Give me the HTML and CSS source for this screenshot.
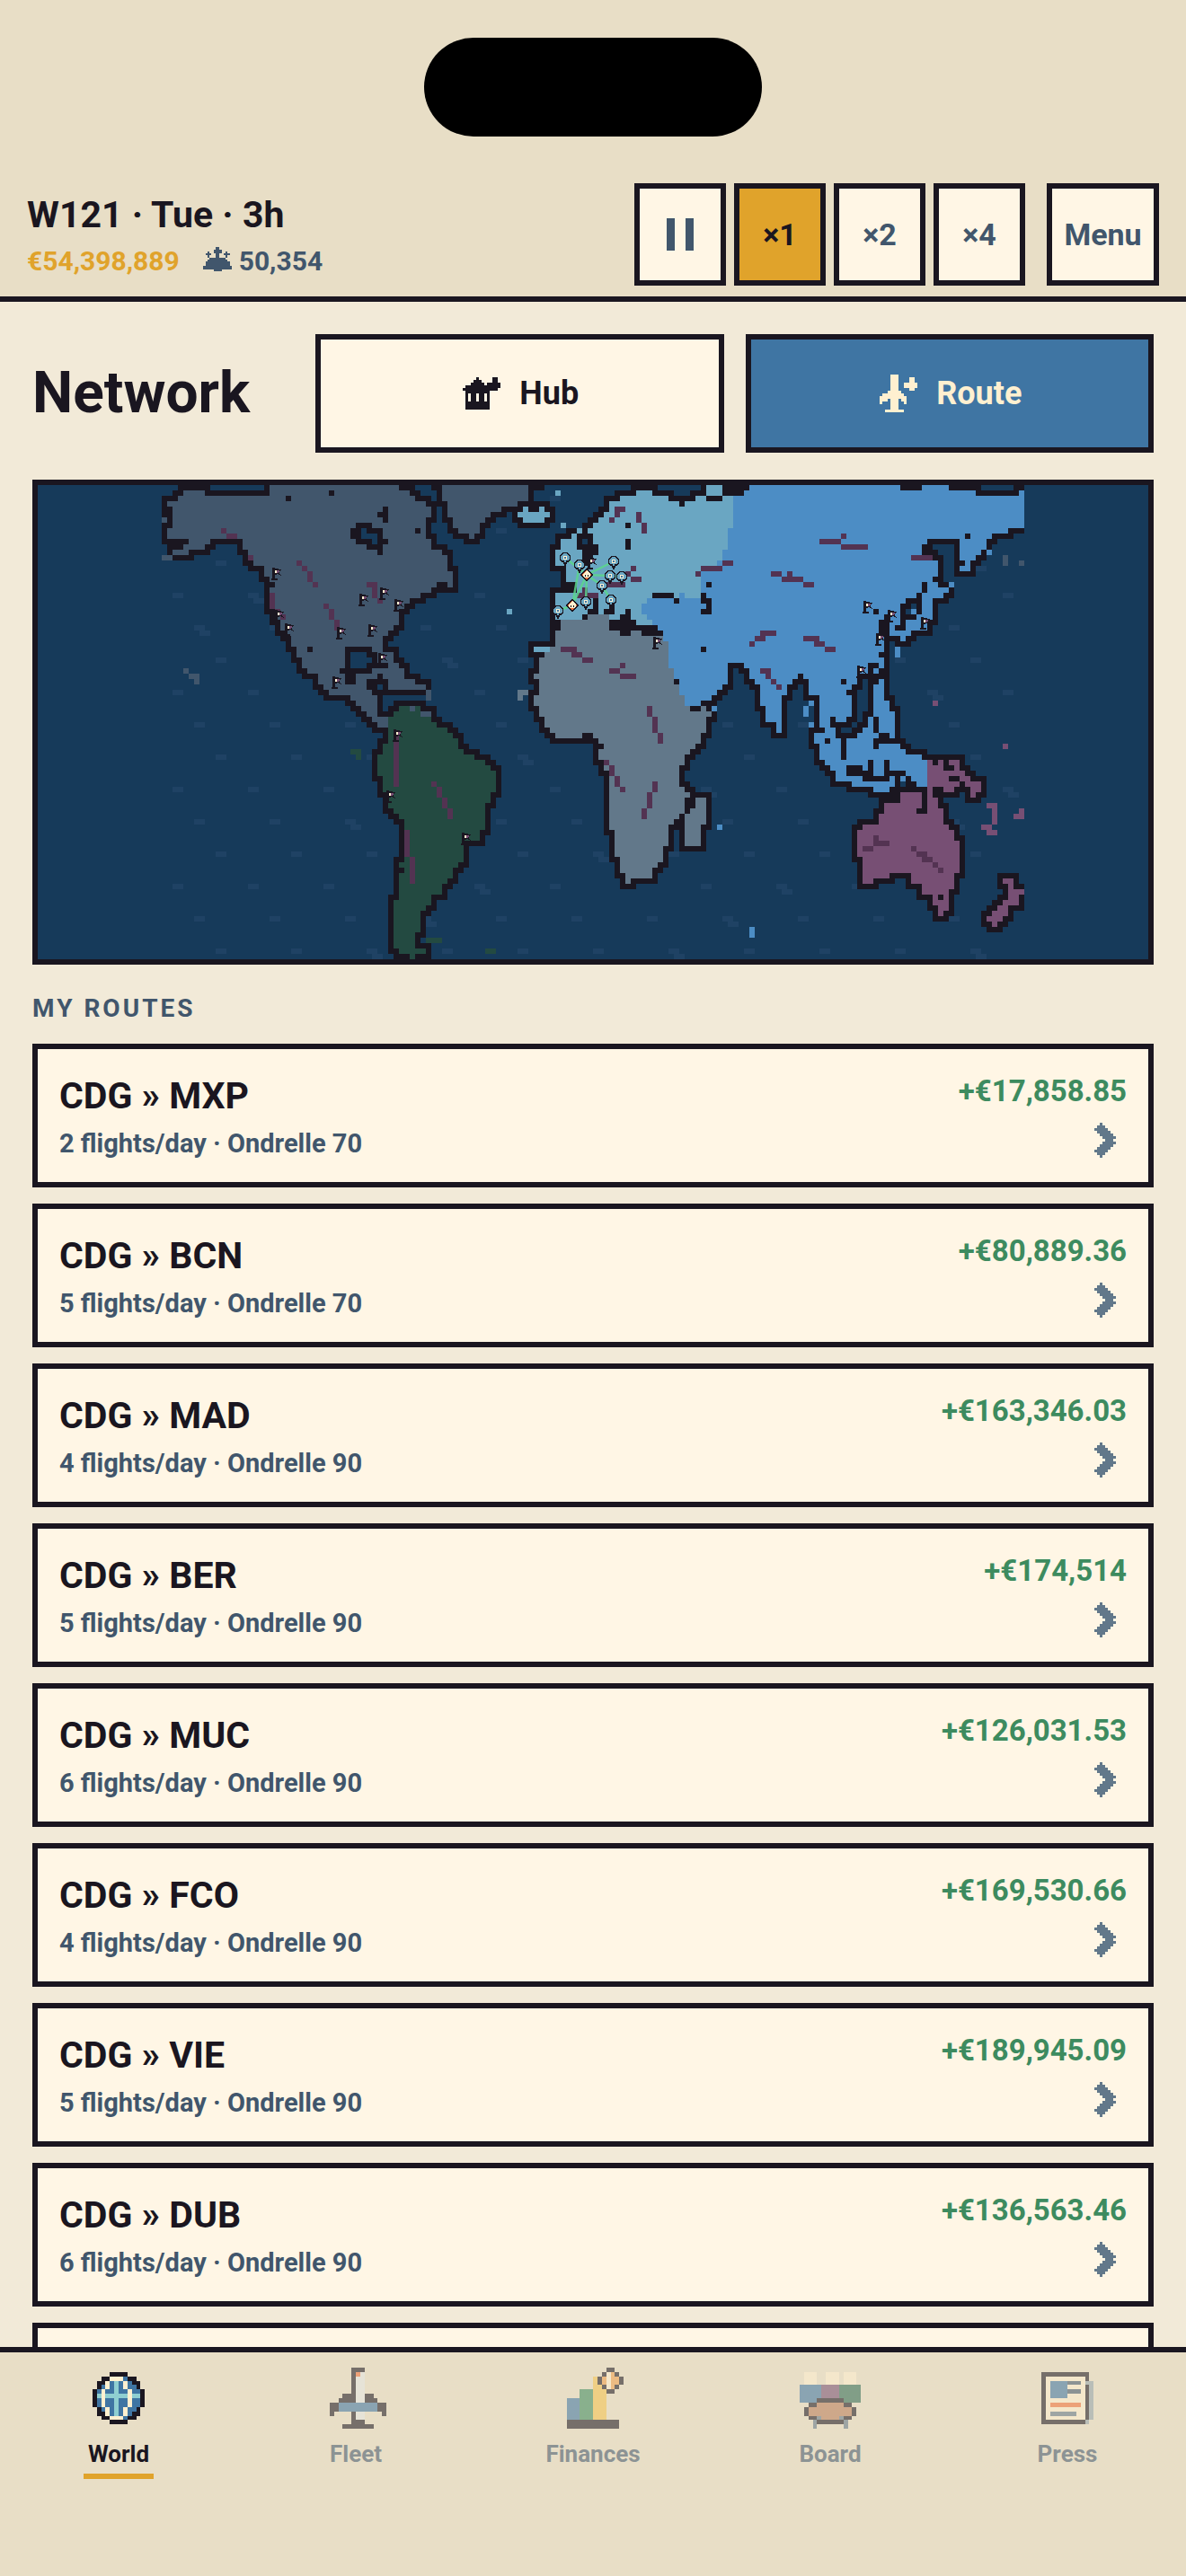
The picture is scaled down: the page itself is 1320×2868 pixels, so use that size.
FILE: index.html
```html
<!DOCTYPE html>
<html lang="en">
<head>
    <meta charset="UTF-8">
    <meta name="viewport" content="width=device-width, initial-scale=1.0">
    <title>Network</title>
    <link rel="stylesheet" href="styles.css">
</head>
<body>
    <!-- Shared pixel icons -->
    <svg class="sprites" aria-hidden="true">
        <symbol id="chevron" viewBox="-4 -2 16 16">
            <path class="run" d="M2 0h1M1 1h3M0 2h5M1 3h5M2 4h5M3 5h5M4 6h3M3 7h5M2 8h5M1 9h5M0 10h5M1 11h3M2 12h1"/>
        </symbol>
        <symbol id="flag" viewBox="0 0 13 15" overflow="visible">
            <path fill="#1a1620" d="M1 0h3v12h3v2h-7v-2h1zM4 1h4v1h3v1h-1v1h-1v3h1v1h1v1h-1v-1h-2v-1h-2v1h-2z"/>
            <path fill="#774f74" d="M4 3h5v2h-1v1h-4z"/>
            <path fill="#fff0d0" d="M4 3h2v3h-2z"/>
        </symbol>
        <symbol id="pin" viewBox="0 0 12 15" overflow="visible">
            <path fill="#6aa6c2" stroke="#1a1620" stroke-width="1.4" d="M-2 -5.500h4l3.500 3.500v3.500l-2 2.500h-1.500l-2 4-2-4h-1.500l-2-2.500v-3.500z"/>
            <path fill="#fff0d0" d="M-2 -2h4v4h-4z"/>
            <path fill="#3f75a3" d="M-1 -1h2v2h-2z"/>
        </symbol>
        <symbol id="hub" viewBox="0 0 12 12" overflow="visible">
            <path fill="#f0703a" stroke="#1a1620" stroke-width="1.4" d="M0 -6.500l6.500 6.500-6.500 6.500-6.500-6.500z"/>
            <path fill="#fff0d0" d="M0 -5l4 4v3h-1v1h-6v-1h-1v-3z"/>
            <path fill="#1a1620" d="M-2 0h1v2h-1zM1 0h1v2h-1z"/>
        </symbol>
    </svg>

    <header class="topbar">
        <div class="status-bar"><div class="island"></div></div>
        <div class="hud">
            <div class="hud-info">
                <div class="clock">W121 · Tue · 3h</div>
                <div class="stats">
                    <span class="cash">€54,398,889</span>
                    <span class="pax">
                        <svg class="pax-icon" viewBox="0 0 16 16" aria-hidden="true"><path class="run" d="M7 1h2M6 2h4M3 3h1M6 3h4M12 3h1M2 4h3M7 4h2M11 4h3M3 5h1M7 5h2M12 5h1M4 6h8M3 7h10M2 8h12M2 9h12M1 10h14M1 11h14M6 12h4"/></svg>
                        50,354
                    </span>
                </div>
            </div>
            <div class="speed">
                <button class="speed-btn" aria-label="Pause"><span class="pause"></span></button>
                <button class="speed-btn active">×1</button>
                <button class="speed-btn">×2</button>
                <button class="speed-btn">×4</button>
            </div>
            <button class="menu-btn">Menu</button>
        </div>
    </header>

    <main class="content">
        <div class="title-row">
            <h1>Network</h1>
            <button class="action">
                <svg class="action-icon" viewBox="0 0 16 16" aria-hidden="true"><path class="run" d="M6 2h1M12 2h2M5 3h3M12 3h2M4 4h5M10 4h5M2 5h13M1 6h13M2 7h9M2 8h1M4 8h2M7 8h2M10 8h1M2 9h1M4 9h2M7 9h2M10 9h1M2 10h1M4 10h2M7 10h2M10 10h1M2 11h9M2 12h9M2 13h9"/></svg>
                Hub
            </button>
            <button class="action primary">
                <svg class="action-icon" viewBox="0 0 16 16" aria-hidden="true"><path class="run" d="M5 1h3M5 2h3M12 2h2M5 3h3M12 3h2M5 4h3M10 4h5M5 5h3M10 5h5M5 6h3M12 6h2M4 7h5M2 8h8M1 9h10M1 10h3M5 10h3M9 10h2M1 11h1M5 11h3M10 11h1M5 12h3M5 13h3M3 14h7"/></svg>
                Route
            </button>
        </div>

        <!-- World map, one unit is one map pixel -->
        <svg class="map" viewBox="-23 0 206 88" role="img" aria-label="World map">
            <defs>
                <pattern id="waves" width="14" height="18" patternUnits="userSpaceOnUse">
                    <path fill="#1f4264" d="M2 2h2v1h-2zM6 8h2v1h-2zM10 14h2v1h-2z"/>
                </pattern>
                <path id="americas" transform="translate(.5 .5)" d="M19 -1V1H8V0H3V1H2V2H0V5H1V7H0V10H1V13H5V12H8V11H9V10H14V12H15V14H16V15H18V17H19V23H20V25H21V27H22V28H23V30H24V32H25V34H26V35H28V37H29V38H30V39H34V40H35V41H36V42H37V43H38V44H39V45H41V47H40V49H39V54H40V57H41V60H42V61H43V62H44V69H43V76H42V86H43V87H49V85H47V83H48V79H49V78H50V76H52V74H53V73H54V71H55V70H56V66H59V64H60V59H61V57H62V52H61V51H60V50H58V49H56V48H55V46H54V45H53V44H51V43H50V41H48V40H43V41H42V42H40V38H49V36H47V35H45V33H44V32H43V30H41V28H42V27H43V26H44V23H45V22H46V21H48V20H50V19H54V15H53V12H52V11H50V9H49V6H50V3H49V2H47V1H46V0H44V-1Z"/>
                <path id="oldworld" transform="translate(.5 .5)" d="M162 0H158V1H151V0H146V-1H140V0H137V-1H108V0H104V-1H100V1H98V2H94V1H91V0H87V1H84V2H82V4H81V5H80V6H79V7H78V8H75V9H73V11H72V15H74V19H72V29H68V31H69V34H68V36H69V38H68V41H69V43H70V45H71V46H72V47H80V51H81V53H82V64H83V69H84V72H85V74H87V73H91V71H92V70H93V67H94V63H95V62H96V67H100V63H101V57H98V56H97V55H96V52H97V50H98V49H99V48H100V46H101V43H102V39H103V38H104V37H105V33H107V34H108V36H109V37H110V41H111V44H113V46H115V39H116V37H117V36H119V39H121V45H120V48H121V51H122V52H123V53H124V55H127V56H131V57H133V60H132V62H129V63H128V69H129V74H132V73H135V72H138V74H140V76H142V78H143V80H145V79H146V75H147V72H148V65H147V63H146V62H145V59H144V57H147V56H149V58H151V57H152V54H150V53H149V52H148V50H141V49H138V48H137V47H136V41H135V39H134V28H136V29H138V28H139V27H142V25H143V21H145V20H146V18H144V13H143V12H141V11H142V10H147V16H150V14H151V13H152V12H153V10H154V9H157V8H162Z"/>
                <clipPath id="clip-americas"><use href="#americas"/></clipPath>
                <clipPath id="clip-oldworld"><use href="#oldworld"/></clipPath>
                <clipPath id="clip-world"><rect width="160" height="88"/></clipPath>
            </defs>

            <rect class="sea" x="-23" width="206" height="88"/>
            <rect fill="url(#waves)" width="160" height="88"/>

            <g clip-path="url(#clip-world)">
                <path class="run wave" d="M17 21h2M7 27h2M53 33h2M67 51h2M101 57h2M35 63h2M81 69h2M59 75h2M49 81h2M105 81h2M39 87h2M95 87h2M151 15h2M143 39h2M157 57h2M147 63h2M115 75h2M151 87h2"/>

                <!-- Land fills -->
                <use class="north" href="#americas"/>
                <g clip-path="url(#clip-americas)">
                    <path class="south" d="M42 43H43V41H46V40H48V43H51V42H70V88H38V46H42Z"/>
                </g>
                <use class="asia" href="#oldworld"/>
                <g clip-path="url(#clip-oldworld)">
                    <path class="europe" d="M68 0H106V8H105V12H104V14H103V15H100V21H90V22H89V24H90V25H91V26H92V31H68Z"/>
                    <path class="africa" d="M68 31H72V29H73V26H74V25H79V24H83V27H93V29H94V34H95V37H96V39H97V41H104V76H68Z"/>
                    <path class="oceania" d="M142 50H160V88H125V57H142Z"/>
                </g>
                <path class="run sea-run" d="M37 8h1M37 9h3M39 10h1M35 31h3M35 32h4M35 33h3M40 37h1M78 10h1M139 22h1M138 23h1M130 36h1M130 37h1M129 38h2M129 39h2M129 40h2M129 41h2M129 42h1M129 43h1M128 44h1M126 45h2M137 55h1"/>

                <!-- Coastlines -->
                <g class="coast">
                    <use href="#americas"/>
                    <use href="#oldworld"/>
                    <g transform="translate(.5 .5)">
                        <path class="north" d="M51 -1V3H52V6H53V8H54V9H56V10H58V9H59V7H60V6H61V5H63V4H66V3H68V-1Z"/>
                        <path class="europe" d="M66 3H71V4H72V6H71V7H66V6H65V4H66Z"/>
                        <path class="oceania" d="M155 72H158V74H159V78H157V80H156V81H155V82H153V81H152V79H153V78H154V77H155V76H156V74H155Z"/>
                    </g>
                </g>
                <path class="run ink-run" d="M50 0h1M69 0h2M1 4h1M2 10h3M1 11h3M20 18h1M31 1h1M23 2h1M47 8h1M27 30h1M41 4h1M40 5h2M41 6h1M51 18h2M44 71h1
                    M36 7h3M35 8h2M38 8h3M35 9h2M40 9h1M36 10h3M40 10h2M38 11h3M40 12h1
                    M34 30h5M34 31h1M38 31h2M34 32h1M39 32h1M34 33h1M38 33h4M33 34h6M34 35h2M34 36h2M40 35h1M38 36h4M38 37h2M41 37h1M39 38h2
                    M68 4h2M101 2h3M104 1h4M96 3h1M86 7h1M86 10h1M86 11h1M77 9h3M77 10h1M79 10h1M77 11h4M78 12h3M78 13h2M78 14h1M75 18h2M73 19h4
                    M91 20h4M95 21h1M101 18h1M100 20h1M100 21h2M101 22h1M100 23h2M100 30h1M95 36h1M73 25h1M73 26h1
                    M78 24h1M80 21h1M80 22h1M79 23h2M83 22h1M82 23h2M86 23h1M85 24h2M83 25h5M83 26h9M85 27h2M89 27h4M70 31h1
                    M78 46h2M81 48h1M98 41h2M100 40h3M101 41h1M97 58h2M97 59h2M97 60h1M96 61h1M96 63h1
                    M118 35h1M122 45h1M149 9h1M148 14h1M143 17h1M141 12h1M142 11h1M132 23h1M134 24h1M133 25h2M133 26h2M133 27h2
                    M141 18h1M141 19h1M140 20h1M138 21h3M137 22h2M140 22h1M137 23h1M140 23h1M137 24h3M137 25h1M136 26h2
                    M133 31h1M131 33h2M131 34h1M133 34h2M129 35h6M129 36h1M131 36h2M128 37h2M131 37h1M127 38h2M131 38h1M128 39h1M131 39h1M128 40h1M131 40h1M128 41h1M131 41h1M128 42h1M130 42h2M127 43h2M130 43h1M132 43h1M124 43h1M124 44h4M129 44h2M132 44h1M125 45h1M128 45h2M132 45h1M125 46h4M133 46h2M132 47h5M132 48h1M126 47h1M126 48h1M126 49h1M126 50h1M123 47h1M126 36h1
                    M131 51h1M134 51h1M127 52h3M131 52h1M134 52h1M127 53h5M134 53h4M130 54h5M136 54h1M138 54h1M136 55h1M138 55h2M135 56h7M134 57h3M133 58h4M141 57h1M141 58h1M141 59h1M140 60h2
                    M143 51h1M145 51h1M145 52h2M146 54h2M148 55h1M143 56h2M143 57h1M144 76h1"/>

                <!-- Mountains -->
                <path class="run peak" d="M11 8h1M12 9h2M16 13h1M25 14h1M26 15h1M27 16h1M27 17h1M28 18h1M38 18h2M39 19h1M39 20h1M40 21h1M20 20h1M20 21h1M20 22h1M21 23h1M22 24h1M30 22h1M31 23h1M31 24h1M32 25h1M32 26h1
                    M43 46h1M43 47h1M43 48h1M43 49h1M43 50h1M43 51h1M43 52h1M43 53h1M43 54h1M43 55h1M50 55h1M51 56h1M51 57h1M52 58h1M52 59h1M53 60h1M53 61h1M45 64h1M45 65h1M45 66h1M45 67h1M45 68h1M46 69h1M46 70h1M46 71h1M46 72h1M46 73h1
                    M74 30h3M76 31h2M78 32h2M85 33h1M83 34h2M85 35h3M90 41h1M90 42h1M91 43h1M91 44h1M91 45h1M92 46h1M92 47h1M82 51h1M83 52h1M83 53h1M84 54h1M84 55h1M85 56h1M91 55h1M91 56h1M90 57h1M90 58h1M90 59h1M89 60h1M89 61h1
                    M84 4h2M84 5h1M83 6h1M88 5h1M88 6h1M89 7h1M89 8h1M87 15h1M86 16h1M87 17h2M82 18h4M78 19h1M77 20h4
                    M104 14h2M100 15h4M99 16h1M126 9h1M122 10h4M126 11h5M139 13h4M113 16h2M116 16h1M115 17h4M119 18h2M111 27h3M110 28h2M109 29h1M119 28h3M121 29h2M123 30h2M111 34h2M112 35h1M113 36h1M114 37h1
                    M132 65h1M132 66h3M130 67h2M139 67h1M140 68h2M141 69h2M143 70h1M144 71h1"/>

                <!-- Small islands and coast gaps -->
                <path class="run north-run" d="M0 6h1M0 13h2M4 34h1M5 35h2M6 36h1M49 38h1M49 39h1M46 41h1M49 42h1M156 13h1M156 14h1M159 14h1M57 9h1"/>
                <path class="run south-run" d="M35 49h2M36 50h1M49 84h3M60 86h2M46 87h1"/>
                <path class="run europe-run" d="M73 1h1M74 7h1M77 8h1M64 23h1M69 30h3"/>
                <path class="run africa-run" d="M66 38h2M66 39h1M86 73h1M82 52h1"/>
                <path class="run asia-run" d="M96 20h1M102 41h1M120 40h1M119 41h1M119 42h1M120 44h1M136 30h1M136 31h1M146 18h1M153 12h1M103 63h1M109 82h1M109 83h1M137 54h1M132 56h3"/>
                <path class="run oceania-run" d="M143 40h1M156 48h1M153 59h2M154 60h1M154 61h1M154 62h1M152 63h2M153 64h2M159 60h1M158 61h2M159 75h1M142 57h1M142 56h1"/>
            </g>

            <!-- Routes and airports, six units to a map pixel -->
            <g transform="scale(.166667)">
                <path class="flight" d="M449 81L473 100L503 85M473 100L499 101L512 102M473 100L490 112L500 128M473 100L472 130M473 100L457 134L465 89M457 134L441 140"/>
                <use href="#flag" x="122" y="92" width="13" height="15"/>
                <use href="#flag" x="242" y="114" width="13" height="15"/>
                <use href="#flag" x="219" y="121" width="13" height="15"/>
                <use href="#flag" x="258" y="127" width="13" height="15"/>
                <use href="#flag" x="125" y="139" width="13" height="15"/>
                <use href="#flag" x="136" y="154" width="13" height="15"/>
                <use href="#flag" x="194" y="158" width="13" height="15"/>
                <use href="#flag" x="229" y="155" width="13" height="15"/>
                <use href="#flag" x="240" y="187" width="13" height="15"/>
                <use href="#flag" x="189" y="213" width="13" height="15"/>
                <use href="#flag" x="473" y="80" width="13" height="15"/>
                <use href="#flag" x="546" y="169" width="13" height="15"/>
                <use href="#flag" x="780" y="129" width="13" height="15"/>
                <use href="#flag" x="807" y="139" width="13" height="15"/>
                <use href="#flag" x="844" y="147" width="13" height="15"/>
                <use href="#flag" x="794" y="165" width="13" height="15"/>
                <use href="#flag" x="773" y="201" width="13" height="15"/>
                <use href="#flag" x="257" y="272" width="13" height="15"/>
                <use href="#flag" x="249" y="340" width="13" height="15"/>
                <use href="#flag" x="333" y="387" width="13" height="15"/>
                <use href="#pin" x="449" y="81" width="12" height="15"/>
                <use href="#pin" x="465" y="89" width="12" height="15"/>
                <use href="#pin" x="503" y="85" width="12" height="15"/>
                <use href="#pin" x="499" y="101" width="12" height="15"/>
                <use href="#pin" x="512" y="102" width="12" height="15"/>
                <use href="#pin" x="490" y="112" width="12" height="15"/>
                <use href="#pin" x="472" y="130" width="12" height="15"/>
                <use href="#pin" x="500" y="128" width="12" height="15"/>
                <use href="#pin" x="441" y="140" width="12" height="15"/>
                <use href="#hub" x="473" y="100" width="12" height="12"/>
                <use href="#hub" x="457" y="134" width="12" height="12"/>
            </g>
        </svg>

        <h2>MY ROUTES</h2>
        <div class="routes">
            <a class="route" href="#">
                <div class="route-info">
                    <div class="route-name">CDG » MXP</div>
                    <div class="route-meta">2 flights/day · Ondrelle 70</div>
                </div>
                <div class="route-side">
                    <div class="profit">+€17,858.85</div>
                    <svg class="chevron"><use href="#chevron"/></svg>
                </div>
            </a>
            <a class="route" href="#">
                <div class="route-info">
                    <div class="route-name">CDG » BCN</div>
                    <div class="route-meta">5 flights/day · Ondrelle 70</div>
                </div>
                <div class="route-side">
                    <div class="profit">+€80,889.36</div>
                    <svg class="chevron"><use href="#chevron"/></svg>
                </div>
            </a>
            <a class="route" href="#">
                <div class="route-info">
                    <div class="route-name">CDG » MAD</div>
                    <div class="route-meta">4 flights/day · Ondrelle 90</div>
                </div>
                <div class="route-side">
                    <div class="profit">+€163,346.03</div>
                    <svg class="chevron"><use href="#chevron"/></svg>
                </div>
            </a>
            <a class="route" href="#">
                <div class="route-info">
                    <div class="route-name">CDG » BER</div>
                    <div class="route-meta">5 flights/day · Ondrelle 90</div>
                </div>
                <div class="route-side">
                    <div class="profit">+€174,514</div>
                    <svg class="chevron"><use href="#chevron"/></svg>
                </div>
            </a>
            <a class="route" href="#">
                <div class="route-info">
                    <div class="route-name">CDG » MUC</div>
                    <div class="route-meta">6 flights/day · Ondrelle 90</div>
                </div>
                <div class="route-side">
                    <div class="profit">+€126,031.53</div>
                    <svg class="chevron"><use href="#chevron"/></svg>
                </div>
            </a>
            <a class="route" href="#">
                <div class="route-info">
                    <div class="route-name">CDG » FCO</div>
                    <div class="route-meta">4 flights/day · Ondrelle 90</div>
                </div>
                <div class="route-side">
                    <div class="profit">+€169,530.66</div>
                    <svg class="chevron"><use href="#chevron"/></svg>
                </div>
            </a>
            <a class="route" href="#">
                <div class="route-info">
                    <div class="route-name">CDG » VIE</div>
                    <div class="route-meta">5 flights/day · Ondrelle 90</div>
                </div>
                <div class="route-side">
                    <div class="profit">+€189,945.09</div>
                    <svg class="chevron"><use href="#chevron"/></svg>
                </div>
            </a>
            <a class="route" href="#">
                <div class="route-info">
                    <div class="route-name">CDG » DUB</div>
                    <div class="route-meta">6 flights/day · Ondrelle 90</div>
                </div>
                <div class="route-side">
                    <div class="profit">+€136,563.46</div>
                    <svg class="chevron"><use href="#chevron"/></svg>
                </div>
            </a>
            <div class="route"></div>
        </div>
    </main>

    <nav class="tabs">
        <a class="tab active" href="#">
            <svg viewBox="0 0 16 16" aria-hidden="true">
                <path fill="#3f75a3" d="M6 3h4v1h1v1h1v1h1v4h-1v2h-1v1H5v-1H4v-2H3V6h1V4h2z"/>
                <path class="run" stroke="#8fcfd1" d="M7 4h1M7 5h1M7 6h1M3 7h10M7 8h1M7 9h1M7 10h1M7 11h1"/>
                <path class="run" stroke="#fff0d0" d="M6 3h3M5 4h1M9 4h1M5 5h1M9 5h1M4 6h1M10 6h1M4 7h1M10 7h1M4 8h1M10 8h1M4 9h1M10 9h1M5 10h1M9 10h1M5 11h1M9 11h1M6 12h3"/>
                <path class="run" stroke="#1a1620" d="M6 2h4M4 3h2M10 3h2M3 4h2M11 4h2M3 5h1M12 5h1M2 6h1M13 6h1M2 7h1M13 7h1M2 8h1M13 8h1M2 9h1M13 9h1M3 10h1M12 10h1M3 11h2M11 11h2M4 12h2M10 12h2M6 13h4"/>
            </svg>
            <span>World</span>
        </a>
        <a class="tab" href="#">
            <svg viewBox="0 0 16 16" aria-hidden="true">
                <path fill="#e5e8e6" d="M8 2h2v11H8z"/>
                <path fill="#3f75a3" d="M4 9h9v2H4z"/>
                <path fill="#f0703a" d="M8 2h1v1H8z"/>
                <path class="run" stroke="#1a1620" d="M7 1h3M7 2h1M7 3h1M7 4h1M7 5h1M7 6h1M5 7h3M10 7h2M4 8h4M10 8h3M2 9h2M13 9h2M2 10h2M13 10h2M2 11h1M7 11h1M14 11h1M7 12h1M7 13h3M5 14h7"/>
            </svg>
            <span>Fleet</span>
        </a>
        <a class="tab" href="#">
            <svg viewBox="0 0 16 16" aria-hidden="true">
                <path fill="#3f75a3" d="M2 8h3v5H2z"/>
                <path fill="#3d8b5f" d="M5 6h3v7H5z"/>
                <path fill="#f6c34f" d="M8 3h3v10H8z"/>
                <path fill="#1a1620" d="M2 13h12v2H2z"/>
                <path fill="#f0a04b" d="M11 2h2v1h1v2h-1v1h-2v-1h-1v-2h1z"/>
                <path fill="#fff0d0" d="M11 2h1v4h-1z"/>
                <path class="run" stroke="#1a1620" d="M11 1h2M10 2h1M13 2h1M9 3h1M14 3h1M9 4h1M14 4h1M10 5h1M13 5h1M11 6h2"/>
            </svg>
            <span>Finances</span>
        </a>
        <a class="tab" href="#">
            <svg viewBox="0 0 16 16" aria-hidden="true">
                <path fill="#fff0d0" d="M2 2h3v3H2zM7 2h3v3H7zM11 2h3v3h-3z"/>
                <path fill="#3f75a3" d="M1 5h5v4H1z"/>
                <path fill="#774f74" d="M6 5h4v4H6z"/>
                <path fill="#2d6a55" d="M10 5h5v4h-5z"/>
                <path fill="#ba7d5a" d="M5 9h6v1h2v2h-2v1H5v-1H3v-2h2z"/>
                <path class="run" stroke="#1a1620" d="M5 8h6M3 9h2M11 9h2M2 10h1M13 10h1M2 11h1M13 11h1M3 12h2M11 12h2M5 13h6"/>
                <path class="run" stroke="#62788a" d="M5 12h1M10 12h1M4 13h1M11 13h1M4 14h1M11 14h1"/>
            </svg>
            <span>Board</span>
        </a>
        <a class="tab" href="#">
            <svg viewBox="0 0 16 16" aria-hidden="true">
                <path fill="#fff0d0" d="M3 3h9v10H3z"/>
                <path fill="#1a1620" d="M2 2h11v2h-1V3H3v10h9V5h1v8h-1v1H2z"/>
                <path fill="#3f75a3" d="M4 4h4v4H4z"/>
                <path class="run" stroke="#41566c" d="M8 4h3M8 6h3"/>
                <path class="run" stroke="#f0703a" d="M4 9h7"/>
                <path class="run" stroke="#62788a" d="M4 11h6"/>
                <path fill="#93a5ae" d="M12 4h2v9h-1v1h-1v-1h1V5h-1z"/>
            </svg>
            <span>Press</span>
        </a>
    </nav>
</body>
</html>
```

FILE: styles.css
```css
/* General Styles */
* {
    box-sizing: border-box;
}

body {
    margin: 0;
    height: 100vh;
    display: flex;
    flex-direction: column;
    overflow: hidden;
    background: #f2ead8;
    color: #1a1620;
    font-family: Roboto, "Liberation Sans", sans-serif;
    font-weight: 700;
}

svg {
    display: block;
    shape-rendering: crispEdges;
}

a {
    color: inherit;
    text-decoration: none;
}

button {
    margin: 0;
    padding: 0;
    font: inherit;
    color: #41566c;
    background: #fff6e5;
    border: 6px solid #1a1620;
    border-radius: 0;
    cursor: pointer;
}

.sprites {
    position: absolute;
    width: 0;
    height: 0;
}

/* Horizontal runs of pixels, one row each */
.run {
    fill: none;
    stroke-width: 1px;
    transform: translateY(0.5px);
}

/* Top bar */
.topbar {
    flex: none;
    background: #e8dec6;
    border-bottom: 6px solid #1a1620;
}

.status-bar {
    height: 204px;
    padding-top: 42px;
}

.island {
    width: 376px;
    height: 110px;
    margin: 0 auto;
    border-radius: 55px;
    background: #000;
}

.hud {
    display: flex;
    align-items: center;
    padding: 0 30px 12px;
}

.hud-info {
    flex: 1;
}

.clock {
    font-size: 41px;
    line-height: 58px;
    margin-bottom: 2px;
}

.stats {
    display: flex;
    gap: 24px;
    font-size: 30px;
    line-height: 42px;
}

.cash {
    color: #e0a32b;
}

.pax {
    display: flex;
    align-items: center;
    gap: 6px;
    color: #41566c;
}

.pax-icon {
    width: 36px;
    height: 36px;
    stroke: #41566c;
}

.speed {
    display: flex;
    gap: 9px;
    margin-right: 24px;
}

.speed-btn, .menu-btn {
    width: 102px;
    height: 114px;
    font-size: 34px;
}

.speed-btn.active {
    background: #e0a32b;
    color: #1a1620;
}

.menu-btn {
    width: 125px;
}

.pause {
    display: block;
    width: 30px;
    height: 36px;
    margin: 0 auto;
    border: solid #41566c;
    border-width: 0 9px;
}

/* Network screen */
.content {
    flex: 1;
    min-height: 0;
    overflow: hidden;
    padding: 36px 36px 0;
}

.title-row {
    display: grid;
    grid-template-columns: 291px 1fr 1fr;
    column-gap: 24px;
    align-items: center;
    margin-bottom: 30px;
}

h1 {
    margin: 0;
    font-size: 64px;
    line-height: 72px;
}

.action {
    display: flex;
    align-items: center;
    justify-content: center;
    gap: 18px;
    height: 132px;
    font-size: 36px;
    color: #1a1620;
}

.action.primary {
    background: #3f75a3;
    color: #fff0d0;
}

.action-icon {
    width: 48px;
    height: 48px;
    stroke: currentColor;
}

/* World map */
.map {
    width: 100%;
    height: auto;
    border: 6px solid #1a1620;
}

.sea { fill: #163a5a; }
.north { fill: #41566c; }
.south { fill: #234a41; }
.europe { fill: #6aa6c2; }
.asia { fill: #4c8dc5; }
.africa { fill: #62788a; }
.oceania { fill: #774f74; }

.wave { stroke: #1f4264; }
.sea-run { stroke: #163a5a; }
.north-run { stroke: #41566c; }
.south-run { stroke: #234a41; }
.europe-run { stroke: #6aa6c2; }
.asia-run { stroke: #4c8dc5; }
.africa-run { stroke: #62788a; }
.oceania-run { stroke: #774f74; }
.ink-run { stroke: #1a1620; }
.peak { stroke: #533352; }

.coast {
    stroke: #1a1620;
    stroke-width: 1px;
}

.coast > use {
    fill: none;
}

.flight {
    fill: none;
    stroke: #5ad68c;
    stroke-width: 2.5px;
    stroke-opacity: 0.85;
    shape-rendering: auto;
}

/* Routes */
h2 {
    margin: 32px 0 22px;
    font-size: 28px;
    line-height: 34px;
    letter-spacing: 3px;
    color: #41566c;
}

.routes {
    display: flex;
    flex-direction: column;
    gap: 18px;
}

.route {
    display: flex;
    align-items: center;
    justify-content: space-between;
    min-height: 160px;
    padding: 2px 24px 0;
    background: #fff6e5;
    border: 6px solid #1a1620;
}

.route-name {
    font-size: 41px;
    line-height: 56px;
    margin-bottom: 4px;
}

.route-meta {
    font-size: 29px;
    line-height: 42px;
    color: #41566c;
}

.route-side {
    display: flex;
    flex-direction: column;
    align-items: flex-end;
    gap: 8px;
}

.profit {
    font-size: 33px;
    line-height: 42px;
    color: #3d8b5f;
}

.chevron {
    width: 48px;
    height: 48px;
    stroke: #62788a;
}

/* Bottom tabs */
.tabs {
    flex: none;
    display: flex;
    padding: 12px 0 108px;
    background: #e8dec6;
    border-top: 6px solid #1a1620;
}

.tab {
    flex: 1;
    display: flex;
    flex-direction: column;
    align-items: center;
    font-size: 26px;
    line-height: 32px;
    color: #41566c;
    opacity: 0.55;
}

.tab svg {
    width: 78px;
    height: 78px;
    margin-bottom: 7px;
}

.tab::after {
    content: "";
    width: 78px;
    height: 6px;
    margin-top: 6px;
}

.tab.active {
    color: #1a1620;
    opacity: 1;
}

.tab.active::after {
    background: #e0a32b;
}
```
